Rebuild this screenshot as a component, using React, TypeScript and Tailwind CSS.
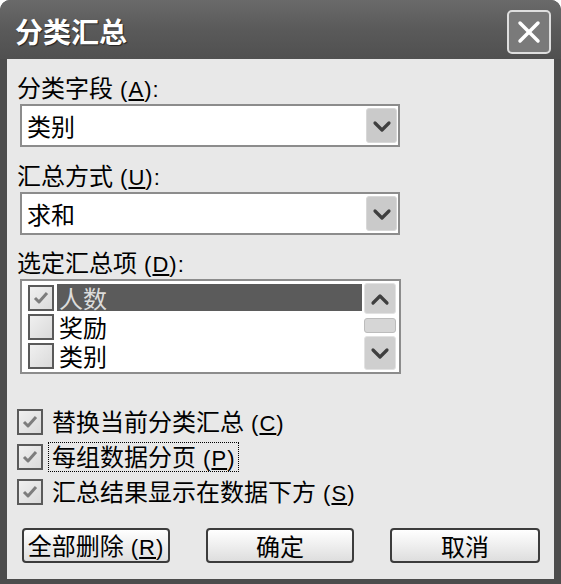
import React from 'react';

const Mn: React.FC<{ k: string; colon?: boolean }> = ({ k, colon }) => (
    <span className="font-['Liberation_Sans',sans-serif] text-[22px] tracking-[1px]">
        {' ('}
        <u>{k}</u>
        {')'}
        {colon ? ':' : ''}
    </span>
);

const Chevron: React.FC<{ up?: boolean }> = ({ up }) => (
    <svg width="20" height="14" viewBox="0 0 20 14">
        <polyline
            points={up ? '3,11 10,4 17,11' : '3,4 10,11 17,4'}
            fill="none"
            stroke="#3f3f3f"
            strokeWidth="3.2"
            strokeLinecap="round"
            strokeLinejoin="round"
        />
    </svg>
);

const Check: React.FC = () => (
    <svg width="18" height="16" viewBox="0 0 18 16">
        <polyline points="3,8 7,12 15,3" fill="none" stroke="#7d7d7d" strokeWidth="3" strokeLinejoin="round" />
    </svg>
);

const Box: React.FC<{ checked?: boolean }> = ({ checked }) => (
    <div className="w-[26px] h-[26px] shrink-0 border-2 border-[#5a5a5a] bg-gradient-to-br from-[#f0f0f0] to-[#dadada] flex items-center justify-center">
        {checked && <Check />}
    </div>
);

const Combo: React.FC<{ value: string }> = ({ value }) => (
    <div className="ml-[3px] w-[380px] h-[43px] border-2 border-[#8c8c8c] bg-white flex items-center pl-[5px] pr-[1px]">
        <span className="flex-1 text-[24px] leading-none text-black">{value}</span>
        <div className="w-[31px] h-[35px] rounded-[3px] bg-[#cacaca] border border-[#d8d8d8] flex items-center justify-center">
            <Chevron />
        </div>
    </div>
);

const ListRow: React.FC<{ label: string; checked?: boolean; selected?: boolean }> = ({ label, checked, selected }) => (
    <div className="h-[29px] flex items-center">
        <Box checked={checked} />
        <div
            className={
                selected
                    ? 'ml-[3px] flex-1 h-[27px] flex items-center bg-[#5b5b5b] text-[#dcdcdc] text-[24px] leading-[24px] pl-[2px]'
                    : 'ml-[3px] flex-1 h-[27px] flex items-center text-black text-[24px] leading-[24px] pl-[2px]'
            }
        >
            {label}
        </div>
    </div>
);

const Option: React.FC<{ text: string; k: string; focus?: boolean }> = ({ text, k, focus }) => (
    <div className="h-[35px] flex items-center">
        <Box checked />
        <span
            className={
                focus
                    ? 'ml-[5px] px-[3px] h-[30px] flex items-center border border-dotted border-black text-[24px] leading-none'
                    : 'ml-[5px] px-[3px] h-[30px] flex items-center border border-transparent text-[24px] leading-none'
            }
        >
            <span>
                {text}
                <Mn k={k} />
            </span>
        </span>
    </div>
);

const Btn: React.FC<{ w: string; children: React.ReactNode }> = ({ w, children }) => (
    <div className={`${w} h-[35px] rounded-[4px] border-2 border-[#3c3c3c] bg-gradient-to-b from-white to-[#dedede] flex items-center justify-center text-[24px] leading-none text-black whitespace-nowrap`}>
        <span>{children}</span>
    </div>
);

const App: React.FC = () => {
    return (
        <div className="w-[561px] h-[584px] bg-[#4c4c4c] rounded-t-[10px] overflow-hidden flex flex-col font-['Noto_Sans_CJK_SC',sans-serif] text-black">
            {/* Title bar */}
            <div className="h-[59px] shrink-0 flex items-center justify-between pl-[15px] pr-[10px] bg-gradient-to-b from-[#6a6a6a] via-[#5a5a5a] to-[#505050]">
                <span className="text-[28px] font-bold leading-none text-white mt-[2px] [text-shadow:1px_1px_1px_#222]">分类汇总</span>
                <div className="w-[44px] h-[44px] mt-[4px] rounded-[5px] border-2 border-[#dedede] bg-[#7a7a7a] flex items-center justify-center">
                    <svg width="26" height="26" viewBox="0 0 26 26">
                        <line x1="4" y1="4" x2="22" y2="22" stroke="white" strokeWidth="3.5" strokeLinecap="round" />
                        <line x1="22" y1="4" x2="4" y2="22" stroke="white" strokeWidth="3.5" strokeLinecap="round" />
                    </svg>
                </div>
            </div>

            {/* Body */}
            <div className="flex-1 mx-[7px] mb-[5px] bg-[#e8e8e8] flex flex-col pl-[10px] pt-[16px]">
                <div className="h-[24px] text-[24px] leading-none">
                    分类字段<Mn k="A" colon />
                </div>
                <div className="mt-[5px]">
                    <Combo value="类别" />
                </div>

                <div className="mt-[16px] h-[24px] text-[24px] leading-none">
                    汇总方式<Mn k="U" colon />
                </div>
                <div className="mt-[5px]">
                    <Combo value="求和" />
                </div>

                <div className="mt-[15px] h-[24px] text-[24px] leading-none">
                    选定汇总项<Mn k="D" colon />
                </div>
                <div className="mt-[5px] ml-[3px] w-[381px] h-[95px] border-2 border-[#8c8c8c] bg-white flex p-[2px]">
                    <div className="flex-1 pl-[4px]">
                        <ListRow label="人数" checked selected />
                        <ListRow label="奖励" />
                        <ListRow label="类别" />
                    </div>
                    <div className="w-[32px] ml-[2px] mr-[1px] flex flex-col">
                        <div className="h-[31px] rounded-[3px] bg-[#cfcfcf] border border-[#e2e2e2] flex items-center justify-center">
                            <Chevron up />
                        </div>
                        <div className="mt-[4px] h-[15px] rounded-[3px] bg-[#d6d6d6] border border-[#bcbcbc]" />
                        <div className="mt-[3px] flex-1 rounded-[3px] bg-[#cfcfcf] border border-[#e2e2e2] flex items-center justify-center">
                            <Chevron />
                        </div>
                    </div>
                </div>

                <div className="mt-[30px] flex flex-col">
                    <Option text="替换当前分类汇总" k="C" />
                    <Option text="每组数据分页" k="P" focus />
                    <Option text="汇总结果显示在数据下方" k="S" />
                </div>

                <div className="mt-[19px] ml-[5px] flex gap-[36px]">
                    <Btn w="w-[148px]">
                        全部删除<Mn k="R" />
                    </Btn>
                    <Btn w="w-[148px]">确定</Btn>
                    <Btn w="w-[150px]">取消</Btn>
                </div>
            </div>
        </div>
    );
};

export default App;
